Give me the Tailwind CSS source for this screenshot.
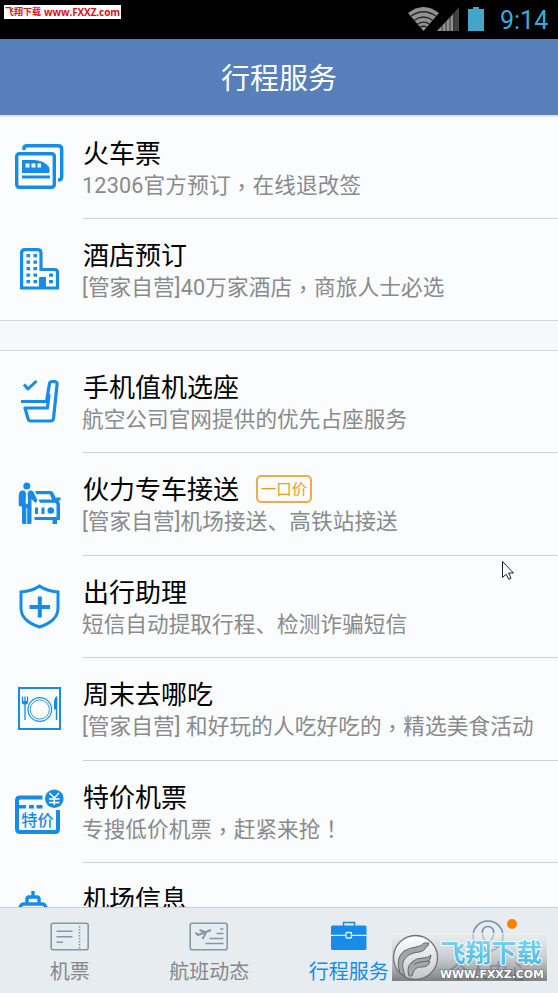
<!DOCTYPE html>
<html lang="zh-CN">
<head>
<meta charset="utf-8">
<title>行程服务</title>
<script src="https://cdn.jsdelivr.net/npm/@tailwindcss/browser@4"></script>
</head>
<body class="bg-[#fbfcfd]">
<div class="relative flex h-[993px] w-[558px] flex-col overflow-hidden bg-[#fbfcfd] font-['Roboto','Noto_Sans_CJK_SC',sans-serif]">
  <!-- status bar -->
  <div class="flex h-[39px] shrink-0 justify-between bg-black">
    <div class="mt-[5px] ml-1 flex h-[14px] w-[117px] items-center justify-center gap-[3px] whitespace-nowrap bg-white text-[#e01010]">
      <span class="text-[9px] leading-[14px] font-bold">飞翔下载</span>
      <span class="font-['Open_Sans',sans-serif] text-[10px] leading-[14px] font-bold tracking-[-0.1px]">www.FXXZ.com</span>
    </div>
    <div class="flex">
      <svg class="h-[39px] w-[84px]" viewBox="404 0 84 39">
        <path d="M408 13Q423.500 1 439 13L423.500 31Z" fill="#929292"/>
        <g fill="none" stroke="#242424" stroke-width="1.300"><path d="M410.500 16.500Q423.500 7 436.500 16.500M414 20.500Q423.500 13.500 433 20.500M417.500 24.200Q423.500 20 429.500 24.200M420 27.500Q423.500 25 427 27.500"/></g>
        <path d="M437 31L453 14V31Z" fill="#929292"/><path d="M453 14L459 7V31H453Z" fill="#424242"/>
        <path d="M442 25V31M446 21V31M450 17V31M454 13V31" stroke="#303030" stroke-width="1"/>
        <path d="M468 9H473V7H479V9H484V31H468Z" fill="#44a4ca"/>
      </svg>
      <span class="w-[70px] pl-[12px] text-[25px] leading-[41px] text-[#35aedd]">9:14</span>
    </div>
  </div>
  <!-- title bar -->
  <header class="flex h-[78px] shrink-0 items-center justify-center border-b-2 border-[#dfe8f2] bg-[#567fbb] pt-[6px] text-[29px] text-white">行程服务</header>

  <main class="flex h-[790px] shrink-0 flex-col overflow-hidden">
    <section class="h-[204px] shrink-0 border-b border-[#d3d5d8]">
      <div class="flex h-[102px]">
        <svg class="-mt-px h-[102px] w-[83px] shrink-0" viewBox="0 0 83 102" fill="none" stroke="#168ce8" stroke-width="3.400">
          <path d="M24 34V32Q24 29.700 27 29.700H58Q61.700 29.700 61.700 33V61Q61.700 64 58 64"/>
          <rect x="16.700" y="37.700" width="37.600" height="33.600" rx="2.500"/>
          <path d="M22 44H35Q44 44.500 49 51Q50.500 54 49 57H22Z" fill="#168ce8" stroke="none"/>
          <path d="M22 61H50" stroke-width="3"/><path d="M25.500 49.600H29.500M31.500 49.600H35.500M37.500 49.600H41" stroke="#fff" stroke-width="4"/>
        </svg>
        <div class="flex-1 border-b border-[#cfd1d4] pt-[21px]">
          <h2 class="h-[32px] text-[26px] leading-[32px] text-black">火车票</h2>
          <p class="-ml-px h-[32px] whitespace-nowrap text-[21.600px] leading-[32px] tracking-[0.180px] text-[#888a8c]">12306官方预订<span lang="zh-Hant" class="relative top-[2px] font-['Noto_Sans_CJK_TC'] leading-none">，</span>在线退改签</p>
        </div>
      </div>
      <div class="flex h-[102px]">
        <svg class="-mt-px h-[102px] w-[83px] shrink-0" viewBox="0 0 83 102" fill="none" stroke="#168ce8" stroke-width="3.200">
          <path d="M21.600 70V35Q21.600 31.600 25 31.600H37.500Q41 31.600 41 35V51.500H54.500Q57.500 51.500 57.500 54.500V70H44V61H40.500V70Z"/>
          <path d="M40 59H46V71H40Z" fill="#168ce8" stroke="none"/>
          <path d="M26.500 37.700H30M33.500 37.700H37M26.500 44.200H30M33.500 44.200H37M26.500 50.700H30M33.500 50.700H37M26.500 57.200H30M33.500 57.200H37M26.500 63.700H30M33.500 63.700H37M49 57.200H53M49 63.700H53"/>
        </svg>
        <div class="flex-1 pt-[21px]">
          <h2 class="h-[32px] text-[26px] leading-[32px] text-black">酒店预订</h2>
          <p class="-ml-px h-[32px] whitespace-nowrap text-[21.600px] leading-[32px] tracking-[0.150px] text-[#888a8c]">[管家自营]40万家酒店<span lang="zh-Hant" class="relative top-[2px] font-['Noto_Sans_CJK_TC'] leading-none">，</span>商旅人士必选</p>
        </div>
      </div>
    </section>
    <div class="h-[29px] shrink-0 bg-[#f5f9fa]"></div>
    <section class="shrink-0 border-t border-[#d3d5d8]">
      <div class="flex h-[102.400px]">
        <svg class="h-[102px] w-[83px] shrink-0" viewBox="0 0 83 102" fill="none" stroke="#168ce8" stroke-width="3.200" stroke-linejoin="round">
          <path d="M24 33.500L28 38L36.500 30" stroke-width="3"/>
          <path d="M21 50.500H46.500L49.500 32.500Q50 30.500 52.500 30.500H55Q57.500 31 57 34L53.500 67.500Q53 70 50.500 70H31Q28.500 70 28 67.500L25 57H47.500L49 43"/>
        </svg>
        <div class="flex-1 border-b border-[#cfd1d4] pt-[21px]">
          <h2 class="h-[32px] text-[26px] leading-[32px] text-black">手机值机选座</h2>
          <p class="-ml-px h-[32px] whitespace-nowrap text-[21.600px] leading-[32px] tracking-[0.080px] text-[#888a8c]">航空公司官网提供的优先占座服务</p>
        </div>
      </div>
      <div class="flex h-[102.400px]">
        <svg class="h-[102px] w-[83px] shrink-0" viewBox="0 0 83 102" fill="#168ce8">
          <circle cx="26.800" cy="33" r="3.500"/>
          <path d="M22 37.500H24.500L26.800 42L29 37.500H31.500Q34 38 34.500 41L37.500 47.500L35.500 50L31.500 46V69.500Q31.500 71 30 71H23.500Q22 71 22 69.500V53.500H20.500Q18.700 53.500 18.700 51.500V43Q18.700 38 22 37.500Z"/>
          <path d="M26 41H27.600L28 50L26.800 51.500L25.600 50Z" fill="#fff"/>
          <path d="M26.300 55H27.200V71H26.300Z" fill="#fbfcfd"/>
          <path d="M35 38H50.500Q52.500 38 53.500 40L55.500 44.500H60.500V47.500H58.500Q60 49 60 52V67H57V71H52.500V67H34.500V64H56.500V52Q56.500 49.800 54.500 49.800H40L38.500 46.500H52L49.800 41.200H36.500Z"/>
          <path d="M35 54.500H38V61H35ZM41.500 54.500H44.500V61H41.500Z"/>
          <circle cx="50.800" cy="57.500" r="3.300"/>
        </svg>
        <div class="flex-1 border-b border-[#cfd1d4] pt-[21px]">
          <div class="flex h-[32px] items-center">
            <h2 class="text-[26px] leading-[32px] text-black">伙力专车接送</h2>
            <span class="-mt-[2px] ml-[17px] h-[28px] w-[56px] rounded-[5px] border-2 border-[#f1ab4e] text-center text-[15.500px] leading-[26px] whitespace-nowrap text-[#f39a20]">一口价</span>
          </div>
          <p class="-ml-px h-[32px] whitespace-nowrap text-[21.600px] leading-[32px] tracking-[0.130px] text-[#888a8c]">[管家自营]机场接送、高铁站接送</p>
        </div>
      </div>
      <div class="flex h-[102.400px]">
        <svg class="h-[102px] w-[83px] shrink-0" viewBox="0 0 83 102" fill="none" stroke="#168ce8" stroke-width="3">
          <path d="M39.500 30Q46.500 35 58 36V52Q58 65 39.500 71Q21 65 21 52V36Q32.500 35 39.500 30Z"/>
          <path d="M29.500 51H50M39.800 40.500V61.500" stroke-width="4"/>
        </svg>
        <div class="flex-1 border-b border-[#cfd1d4] pt-[21px]">
          <h2 class="h-[32px] text-[26px] leading-[32px] text-black">出行助理</h2>
          <p class="-ml-px h-[32px] whitespace-nowrap text-[21.600px] leading-[32px] tracking-[0.080px] text-[#888a8c]">短信自动提取行程、检测诈骗短信</p>
        </div>
      </div>
      <div class="flex h-[102.400px]">
        <svg class="h-[102px] w-[83px] shrink-0" viewBox="0 0 83 102" fill="none" stroke="#168ce8">
          <rect x="19" y="30" width="41" height="41" stroke-width="2"/>
          <circle cx="39.800" cy="51.500" r="11.800" stroke-width="1.200"/><circle cx="39.800" cy="51.500" r="9.600" stroke-width=".9"/>
          <path d="M22.500 38.500V44Q22.500 46 25 46Q27.500 46 27.500 44V38.500M25 38.500V62" stroke-width="1.300"/>
          <path d="M23 43H27V46H23Z" fill="#168ce8" stroke="none"/>
          <path d="M57.300 38V62H55.800V51.500H54V44Q54.300 39 57.300 38Z" fill="#168ce8" stroke="none"/>
        </svg>
        <div class="flex-1 border-b border-[#cfd1d4] pt-[21px]">
          <h2 class="h-[32px] text-[26px] leading-[32px] text-black">周末去哪吃</h2>
          <p class="-ml-px h-[32px] whitespace-nowrap text-[21.600px] leading-[32px] tracking-[0.130px] text-[#888a8c]">[管家自营] 和好玩的人吃好吃的<span lang="zh-Hant" class="relative top-[2px] font-['Noto_Sans_CJK_TC'] leading-none">，</span>精选美食活动</p>
        </div>
      </div>
      <div class="flex h-[102.400px]">
        <svg class="h-[102px] w-[83px] shrink-0" viewBox="0 0 83 102" fill="none" stroke="#168ce8">
          <path d="M42.500 36.500H20Q17 36.500 17 39.500V68Q17 71 20 71H55Q58 71 58 68V49" stroke-width="4"/>
          <path d="M19 45.800H26M29 45.800H34M36.500 45.800H42.500" stroke-width="3.400"/>
          <circle cx="54.300" cy="37.700" r="9.300" fill="#168ce8" stroke="none"/>
          <path d="M49.500 32L54.300 37L59 32M54.300 37V44M49 38H59.500M49 41.500H59.500" stroke="#fff" stroke-width="1.500"/>
          <text x="37.500" y="65" text-anchor="middle" font-family="Noto Sans CJK SC" font-size="16.200" font-weight="500" fill="#168ce8" stroke="none">特价</text>
        </svg>
        <div class="flex-1 border-b border-[#cfd1d4] pt-[21px]">
          <h2 class="h-[32px] text-[26px] leading-[32px] text-black">特价机票</h2>
          <p class="-ml-px h-[32px] whitespace-nowrap text-[21.600px] leading-[32px] tracking-[0.080px] text-[#888a8c]">专搜低价机票<span lang="zh-Hant" class="relative top-[2px] font-['Noto_Sans_CJK_TC'] leading-none">，</span>赶紧来抢<span lang="zh-Hant" class="font-['Noto_Sans_CJK_TC'] leading-none">！</span></p>
        </div>
      </div>
      <div class="flex h-[102.400px]">
        <svg class="h-[102px] w-[83px] shrink-0" viewBox="0 0 83 102" fill="none" stroke="#168ce8" stroke-width="3.400">
          <path d="M33 28V33M27 39.500V36Q27 34 29 34H37Q39 34 39 36V39.500M20 44.500Q21 41 24 41H42Q45 41 46 44.500"/>
        </svg>
        <div class="flex-1 pt-[21px]">
          <h2 class="h-[32px] text-[26px] leading-[32px] text-black">机场信息</h2>
        </div>
      </div>
    </section>
  </main>

  <!-- tab bar -->
  <nav class="grid h-[86px] shrink-0 grid-cols-4 border-t border-[#cdd1d5] bg-[#e7ecf0] text-[20px] text-[#85888b]">
    <div class="flex flex-col items-center pt-[14px]">
      <svg class="h-[30px] w-[40px]" viewBox="0 0 40 30" fill="none" stroke="#8299aa" stroke-width="1.600">
        <rect x="1.200" y="1.300" width="37" height="26.400" rx="2"/><path d="M6.500 9.300H22.500M6.500 14.700H22.500M6.500 20.200H13"/><path d="M29.500 4V27" stroke-dasharray="1.500 1.500"/>
      </svg>
      <span class="mt-[5px] leading-[30px]">机票</span>
    </div>
    <div class="flex flex-col items-center pt-[14px]">
      <svg class="h-[30px] w-[40px]" viewBox="0 0 40 30" fill="none" stroke="#8299aa" stroke-width="1.600">
        <rect x="1.200" y="1.300" width="37" height="26.400" rx="2"/>
        <path d="M31 7H34.500M27.500 11.500H34.500M20.500 16.500H34.500M16.500 21.500H34.500" stroke-width="1.400"/>
        <path d="M6.500 10.500L9 13L22 8M10.500 8L16 10M17 10.500L13.500 17" stroke-width="2"/>
      </svg>
      <span class="mt-[5px] leading-[30px]">航班动态</span>
    </div>
    <div class="flex flex-col items-center pt-[13px] text-[#168ce8]">
      <svg class="h-[30px] w-[40px]" viewBox="0 0 40 30" fill="none">
        <path d="M14.500 5V1.500H25.500V5" stroke="#168ce8" stroke-width="1.500"/>
        <rect x="2" y="4.500" width="35.500" height="24.500" rx="1.500" fill="#168ce8"/>
        <path d="M2 14.300H37.500" stroke="#e7ecf0" stroke-width="1.200"/>
        <rect x="17" y="11.500" width="5.500" height="5.500" rx=".8" fill="#168ce8" stroke="#e7ecf0" stroke-width="1.300"/>
      </svg>
      <span class="mt-[6px] leading-[30px]">行程服务</span>
    </div>
    <div class="relative flex flex-col items-center pt-[12px]">
      <svg class="h-[32px] w-[34px]" viewBox="0 0 34 32" fill="none" stroke="#6e91af" stroke-width="1.500">
        <circle cx="17" cy="16" r="15"/><path d="M17 6.500C12.500 6.500 10.800 10 11.300 14Q12 18.500 14.500 21V24L8 27M17 6.500C21.500 6.500 23.200 10 22.700 14Q22 18.500 19.500 21V24L26 27"/>
      </svg>
      <span class="mt-[5px] leading-[30px] text-[#6c6f72]">个人中心</span>
      <span class="absolute top-[11px] left-[88px] size-[10px] rounded-full bg-[#ff8000]"></span>
    </div>
  </nav>

  <!-- site badge floating over the tab bar -->
  <svg class="absolute top-[933px] left-[391px] h-[49px] w-[157px]" viewBox="0 0 157 49">
    <defs>
      <linearGradient id="plate" x1="0" y1="0" x2="0" y2="1"><stop offset="0" stop-color="#eef0f2" stop-opacity=".5"/><stop offset=".5" stop-color="#b4b7b9" stop-opacity=".6"/><stop offset="1" stop-color="#606264" stop-opacity=".8"/></linearGradient>
      <linearGradient id="disc" x1="0" y1="0" x2="0" y2="1"><stop offset="0" stop-color="#fff"/><stop offset="1" stop-color="#c5c7c9"/></linearGradient>
      <linearGradient id="blue" x1="0" y1="0" x2="0" y2="1"><stop offset="0" stop-color="#8bd8f5"/><stop offset="1" stop-color="#45b4df"/></linearGradient>
    </defs>
    <rect x=".5" y=".5" width="156" height="48" fill="url(#plate)" stroke="#eceeef"/>
    <circle cx="24.500" cy="24.500" r="22" fill="url(#disc)" stroke="#707376" stroke-width="1.300"/>
    <g fill="#a3a6a8" stroke="#66696c" stroke-width="1" stroke-linejoin="round">
      <path d="M9 40Q4 25 13 18Q18 15 25 14Q31 13 33 10H38Q37 14 35 14Q34 18 28 19Q17 20 13 27Q10 32 14 43Z"/>
      <path d="M18 43Q15 34 21 29Q25 25 32 25Q37 25 40 22Q40 27 37 28H39Q38 34 31 34Q23 33 21 43Z"/>
      <path d="M23 31Q30 28 38 28" fill="none"/>
    </g>
    <text x="49" y="29" textLength="102" lengthAdjust="spacingAndGlyphs" font-family="Noto Sans CJK SC" font-size="25" font-weight="700" fill="url(#blue)" stroke="#f4fafc" stroke-width="2" paint-order="stroke" stroke-linejoin="round">飞翔下载</text>
    <text x="49" y="44.500" textLength="104" lengthAdjust="spacingAndGlyphs" font-family="DejaVu Sans" font-size="10.500" font-weight="700" fill="#fff" stroke="#686b6e" stroke-width="1.200" paint-order="stroke">WWW.FXXZ.COM</text>
  </svg>

  <!-- pointer -->
  <svg class="absolute top-[560px] left-[501px] h-[21px] w-[14px]" viewBox="0 0 14 21"><path d="M1.500 1.500V17.500L5.200 14.200L7.800 19.300L10 18.200L7.600 13H12.500Z" fill="#fff" stroke="#1b1d2b" stroke-width="1"/></svg>
</div>
</body>
</html>
